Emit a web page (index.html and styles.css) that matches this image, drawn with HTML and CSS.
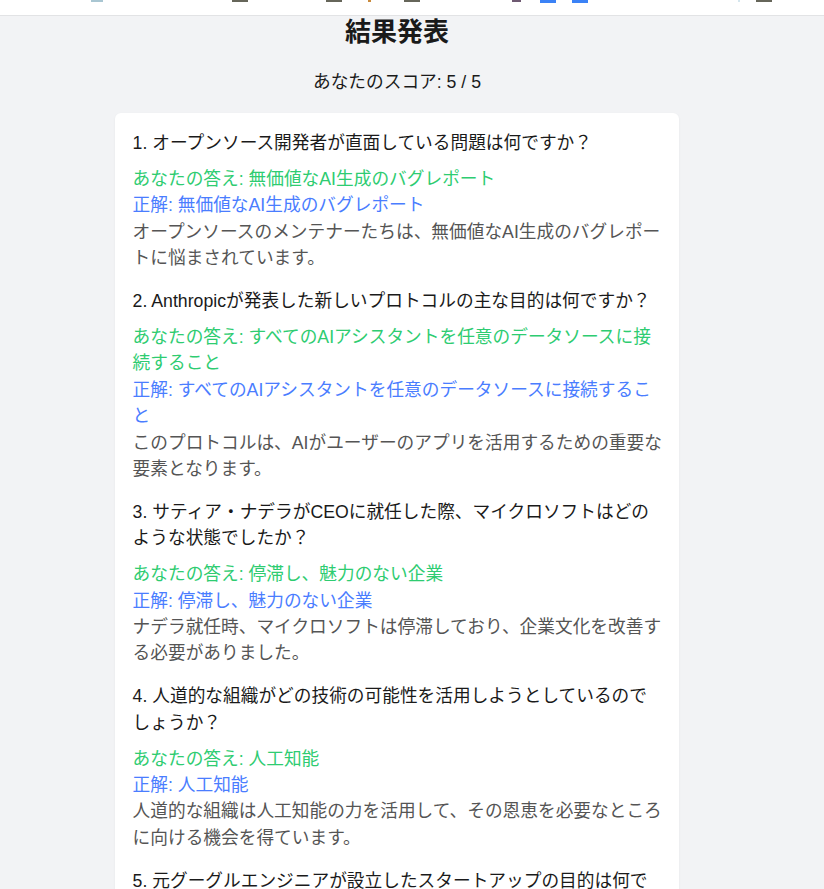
FILE: index.html
```html
<!DOCTYPE html>
<html lang="ja">
<head>
<meta charset="utf-8">
<title>結果発表</title>
<link rel="stylesheet" href="styles.css">
</head>
<body>
<header class="topbar">
  <span class="tick t-a"></span><span class="tick t-b"></span><span class="tick t-c"></span><span class="tick t-d"></span><span class="tick t-e"></span><span class="tick t-f"></span><span class="tick t-g"></span><span class="tick t-h"></span><span class="tick t-i"></span><span class="tick t-j"></span>
</header>
<main class="results">
  <h1 class="title">結果発表</h1>
  <p class="score">あなたのスコア: 5 / 5</p>
  <section class="card">
    <article class="item">
      <p class="question">1. オープンソース開発者が直面している問題は何ですか？</p>
      <p class="yours">あなたの答え: 無価値なAI生成のバグレポート</p>
      <p class="correct">正解: 無価値なAI生成のバグレポート</p>
      <p class="note">オープンソースのメンテナーたちは、無価値なAI生成のバグレポートに悩まされています。</p>
    </article>
    <article class="item">
      <p class="question">2. Anthropicが発表した新しいプロトコルの主な目的は何ですか？</p>
      <p class="yours">あなたの答え: すべてのAIアシスタントを任意のデータソースに接続すること</p>
      <p class="correct">正解: すべてのAIアシスタントを任意のデータソースに接続すること</p>
      <p class="note">このプロトコルは、AIがユーザーのアプリを活用するための重要な要素となります。</p>
    </article>
    <article class="item">
      <p class="question">3. サティア・ナデラがCEOに就任した際、マイクロソフトはどのような状態でしたか？</p>
      <p class="yours">あなたの答え: 停滞し、魅力のない企業</p>
      <p class="correct">正解: 停滞し、魅力のない企業</p>
      <p class="note">ナデラ就任時、マイクロソフトは停滞しており、企業文化を改善する必要がありました。</p>
    </article>
    <article class="item">
      <p class="question">4. 人道的な組織がどの技術の可能性を活用しようとしているのでしょうか？</p>
      <p class="yours">あなたの答え: 人工知能</p>
      <p class="correct">正解: 人工知能</p>
      <p class="note">人道的な組織は人工知能の力を活用して、その恩恵を必要なところに向ける機会を得ています。</p>
    </article>
    <article class="item">
      <p class="question">5. 元グーグルエンジニアが設立したスタートアップの目的は何ですか？</p>
    </article>
  </section>
</main>
</body>
</html>
```
FILE: styles.css
```css
* { box-sizing: border-box; }
html, body { height: 100%; }
body {
  margin: 0;
  height: 889px;
  overflow: hidden;
  background: #f2f3f5;
  color: #1a1a1a;
  font-family: "Liberation Sans", "Noto Sans CJK JP", sans-serif;
  font-size: 17.7px;
  line-height: 26.4px;
}
.topbar {
  position: relative;
  height: 16px;
  background: #fff;
  border-bottom: 1px solid #e2e3e5;
}
.tick { position: absolute; top: 0; height: 2px; background: #66665a; }
.t-a { left: 91px; width: 12px; background: #a9c6d2; }
.t-b { left: 232px; width: 16px; }
.t-c { left: 326px; width: 16px; }
.t-d { left: 368px; width: 3px; background: #c98a3c; }
.t-e { left: 404px; width: 16px; }
.t-f { left: 512px; width: 9px; background: #6f5a72; }
.t-g { left: 540px; width: 16px; height: 3px; background: #3b82f6; }
.t-h { left: 572px; width: 16px; height: 3px; background: #3b82f6; }
.t-i { left: 738px; width: 2px; background: #d5e6ee; }
.t-j { left: 756px; width: 16px; }
.results {
  display: flex;
  flex-direction: column;
  align-items: center;
  width: 794px;
}
.title { margin: 0; font-size: 26px; line-height: 32px; font-weight: 700; }
.score { margin: 18px 0 15px; line-height: 32px; }
.card {
  width: 564px;
  padding: 17px 14.4px 17px 17.6px;
  background: #fff;
  border-radius: 6px;
  box-shadow: 0 1px 3px rgba(0, 0, 0, .05);
}
.item { margin-bottom: 16.4px; }
.item p { margin: 0; }
.item .question { margin-bottom: 9.6px; }
.yours { color: #2ecc71; }
.correct { color: #4a7dff; }
.note { color: #555; }
```
